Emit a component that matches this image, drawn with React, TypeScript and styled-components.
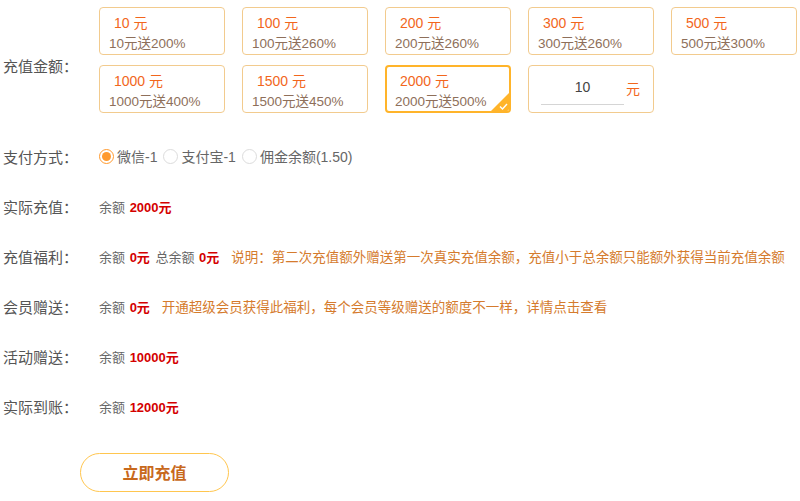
import React, { useState } from "react";
import styled, { createGlobalStyle } from "styled-components";

const Global = createGlobalStyle`
  html, body { margin: 0; padding: 0; background: #fff; }
  body { font-family: "Liberation Sans", "Noto Sans CJK SC", sans-serif; color: #555; }
  * { box-sizing: border-box; }
`;

const Page = styled.div`
  width: 800px;
  padding: 7px 0 0 3px;
`;

const Row = styled.div`
  display: grid;
  grid-template-columns: 96px 1fr;
  align-items: center;
  height: 50px;
`;

const TopRow = styled.div`
  display: grid;
  grid-template-columns: 96px 1fr;
  align-items: center;
  margin-bottom: 18px;
`;

const Label = styled.div<{ $offset?: number }>`
  font-size: 15px;
  color: #555;
  font-family: "Noto Sans CJK SC", sans-serif;
  white-space: nowrap;
  padding-top: ${(p) => p.$offset ?? 0}px;
`;

const CardGrid = styled.div`
  display: grid;
  grid-template-columns: repeat(5, 126px);
  column-gap: 17px;
  row-gap: 10px;
`;

const Card = styled.div<{ $active?: boolean }>`
  position: relative;
  height: 48px;
  border: ${(p) => (p.$active ? "2px solid #ffb42a" : "1px solid #f2cb8e")};
  border-radius: 4px;
  padding: ${(p) => (p.$active ? "4px 0 0 8px" : "5px 0 0 9px")};
  overflow: hidden;
  cursor: pointer;
`;

const Amount = styled.div`
  font-size: 14px;
  line-height: 20px;
  color: #f2661c;
  padding-left: 5px;
`;

const Bonus = styled.div`
  font-size: 13.5px;
  line-height: 20px;
  margin-top: 1px;
  color: #8e6f5a;
  white-space: nowrap;
`;

const Corner = styled.div`
  position: absolute;
  right: 0;
  bottom: 0;
  width: 0;
  height: 0;
  border-style: solid;
  border-width: 0 0 18px 18px;
  border-color: transparent transparent #ffb42a transparent;
`;

const Check = styled.svg`
  position: absolute;
  right: 1px;
  bottom: 1px;
`;

const InputCard = styled.div`
  height: 48px;
  border: 1px solid #f2cb8e;
  border-radius: 4px;
  display: flex;
  align-items: center;
  padding: 0 0 0 12px;
`;

const AmountInput = styled.input`
  width: 83px;
  height: 30px;
  margin-top: 2px;
  border: none;
  border-bottom: 1px solid #d5d5d5;
  outline: none;
  text-align: center;
  font-family: "Liberation Sans", sans-serif;
  font-size: 14px;
  color: #444;
  padding: 0 0 6px;
  background: transparent;
`;

const Yuan = styled.span`
  margin-left: 2px;
  margin-top: -2px;
  font-size: 14px;
  color: #f2661c;
  font-family: "Noto Sans CJK SC", sans-serif;
`;

const Radios = styled.div`
  display: flex;
  align-items: center;
  font-size: 14px;
  color: #666;
  font-family: "Liberation Sans", "Noto Sans CJK SC", sans-serif;
`;

const RadioItem = styled.label`
  display: flex;
  align-items: center;
  margin-right: 6px;
  cursor: pointer;
`;

const Dot = styled.span<{ $on?: boolean }>`
  width: 15px;
  height: 15px;
  border-radius: 50%;
  border: 1px solid ${(p) => (p.$on ? "#ff9a2e" : "#dcdcdc")};
  margin-right: 3px;
  display: flex;
  align-items: center;
  justify-content: center;
  &::after {
    content: "";
    width: 9px;
    height: 9px;
    border-radius: 50%;
    background: ${(p) => (p.$on ? "#ff9a2e" : "transparent")};
  }
`;

const Value = styled.div`
  font-size: 13px;
  color: #666;
  white-space: nowrap;
  font-family: "Liberation Sans", "Noto Sans CJK SC", sans-serif;
`;

const Red = styled.b`
  color: #d40000;
  font-weight: bold;
  margin: 0 2px 0 1px;
`;

const Note = styled.span`
  color: #d57b2d;
  font-size: 13.5px;
  margin-left: 10px;
`;

const Button = styled.button`
  margin: 22px 0 0 77px;
  width: 149px;
  height: 39px;
  border: 1px solid #ffc64f;
  border-radius: 20px;
  background: #fff;
  color: #c8691c;
  font-size: 16px;
  font-weight: bold;
  font-family: "Noto Sans CJK SC", sans-serif;
  cursor: pointer;
  padding: 0 0 1px;
`;

const options = [
  { a: 10, b: "10元送200%" },
  { a: 100, b: "100元送260%" },
  { a: 200, b: "200元送260%" },
  { a: 300, b: "300元送260%" },
  { a: 500, b: "500元送300%" },
  { a: 1000, b: "1000元送400%" },
  { a: 1500, b: "1500元送450%" },
  { a: 2000, b: "2000元送500%" },
];

export default function App() {
  const [sel, setSel] = useState(2000);
  const [pay, setPay] = useState(0);
  const [custom, setCustom] = useState("10");
  const pays = ["微信-1", "支付宝-1", "佣金余额(1.50)"];
  return (
    <Page>
      <Global />
      <TopRow>
        <Label $offset={10}>充值金额：</Label>
        <CardGrid>
          {options.map((o) => (
            <Card key={o.a} $active={sel === o.a} onClick={() => setSel(o.a)}>
              <Amount>{o.a} 元</Amount>
              <Bonus>{o.b}</Bonus>
              {sel === o.a && (
                <>
                  <Corner />
                  <Check width="9" height="7" viewBox="0 0 9 7">
                    <path d="M1 3.5 L3.5 6 L8 1" stroke="#fff" strokeWidth="1.4" fill="none" />
                  </Check>
                </>
              )}
            </Card>
          ))}
          <InputCard>
            <AmountInput value={custom} onChange={(e) => setCustom(e.target.value)} />
            <Yuan>元</Yuan>
          </InputCard>
        </CardGrid>
      </TopRow>
      <Row>
        <Label>支付方式：</Label>
        <Radios>
          {pays.map((p, i) => (
            <RadioItem key={p} onClick={() => setPay(i)}>
              <Dot $on={pay === i} />
              {p}
            </RadioItem>
          ))}
        </Radios>
      </Row>
      <Row>
        <Label>实际充值：</Label>
        <Value>
          余额 <Red>2000元</Red>
        </Value>
      </Row>
      <Row>
        <Label>充值福利：</Label>
        <Value>
          余额 <Red>0元</Red> 总余额 <Red>0元</Red>
          <Note>说明：第二次充值额外赠送第一次真实充值余额，充值小于总余额只能额外获得当前充值余额</Note>
        </Value>
      </Row>
      <Row>
        <Label>会员赠送：</Label>
        <Value>
          余额 <Red>0元</Red>
          <Note>开通超级会员获得此福利，每个会员等级赠送的额度不一样，详情点击查看</Note>
        </Value>
      </Row>
      <Row>
        <Label>活动赠送：</Label>
        <Value>
          余额 <Red>10000元</Red>
        </Value>
      </Row>
      <Row>
        <Label>实际到账：</Label>
        <Value>
          余额 <Red>12000元</Red>
        </Value>
      </Row>
      <Button>立即充值</Button>
    </Page>
  );
}
